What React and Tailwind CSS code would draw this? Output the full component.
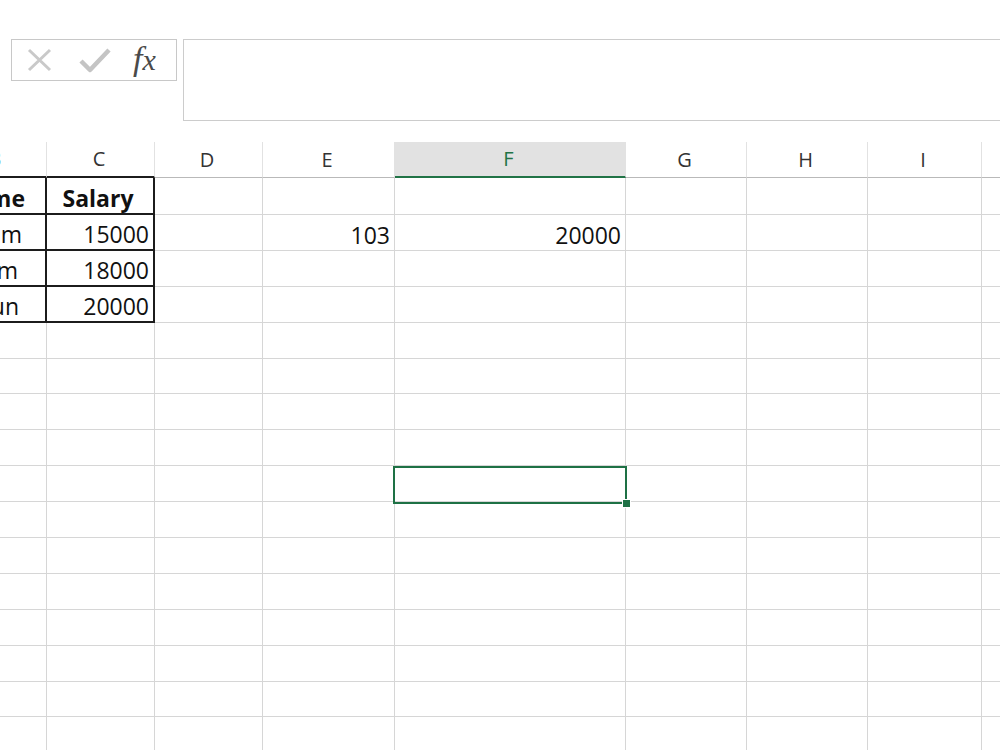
import React from "react";

const columns = [
  { key: "B", width: "w-[100px] -ml-[53px]" },
  { key: "C", width: "w-[108px]" },
  { key: "D", width: "w-[108px]" },
  { key: "E", width: "w-[132px]" },
  { key: "F", width: "w-[231px]" },
  { key: "G", width: "w-[121px]" },
  { key: "H", width: "w-[121px]" },
  { key: "I", width: "w-[114px]" },
  { key: "J", width: "w-[100px]" },
];

// visible cell contents
const data = {
  1: {
    B: { text: "Name", bold: true, pad: "pr-[20px]" },
    C: { text: "Salary", bold: true, center: true },
  },
  2: {
    B: { text: "Ram", pad: "pr-[23px]" },
    C: { text: "15000" },
    E: { text: "103" },
    F: { text: "20000" },
  },
  3: {
    B: { text: "Shyam", pad: "pr-[27px]" },
    C: { text: "18000" },
  },
  4: {
    B: { text: "Arun", pad: "pr-[26px]" },
    C: { text: "20000" },
  },
};

const rows = Array.from({ length: 16 }, (_, i) => i + 1);

const inTable = (row, col) => row <= 4 && (col === "B" || col === "C");

const FormulaBar = () => (
  <div className="flex pt-[39px]">
    <div className="ml-[11px] w-[166px] h-[42px] border-[1.5px] border-[#c8c8c8] flex items-center shrink-0">
      <svg width="26" height="24" viewBox="0 0 26 24" className="ml-[15px]">
        <path d="M2 2 L23 22 M23 2 L2 22" stroke="#c9c9c9" strokeWidth="3" fill="none" />
      </svg>
      <svg width="32" height="26" viewBox="0 0 32 26" className="ml-[26px]">
        <path d="M2 14 L11 23 L30 3" stroke="#c4c4c4" strokeWidth="4.5" fill="none" strokeLinejoin="round" />
      </svg>
      <span className="ml-[22px] -mt-[2px] font-['Liberation_Serif',serif] italic text-[34px] leading-none text-[#4a4a4a]">
        f<span className="text-[30px]">x</span>
      </span>
    </div>
    <div className="ml-[6px] -mr-[6px] flex-1 h-[82px] border-[1.5px] border-[#cccccc]"></div>
  </div>
);

const HeaderRow = () => (
  <div className="flex mt-[21px] h-[36px]">
    {columns.map((col) => {
      const selected = col.key === "F";
      const cls = selected
        ? "bg-[#e2e2e2] border-b-2 border-b-[#217346] text-[#217346]"
        : col.key === "B"
        ? "border-b-2 border-b-[#1c1c1c] text-[#69b3de]"
        : col.key === "C"
        ? "border-b-2 border-b-[#1c1c1c] text-[#333]"
        : "border-b border-b-[#b9b9b9] text-[#333]";
      return (
        <div
          key={col.key}
          className={`${col.width} shrink-0 h-full border-r border-r-[#e2e2e2] flex items-center justify-center pr-[3px] text-[20px] ${cls}`}
        >
          {col.key}
        </div>
      );
    })}
  </div>
);

const Cell = ({ row, col }) => {
  const cell = data[row] && data[row][col.key];
  const table = inTable(row, col.key);
  const height = row === 1 ? "h-[37px]" : "h-[35.9px]";
  const border = table
    ? "border-r-2 border-b-2 border-[#1c1c1c]"
    : "border-r border-b border-[#d6d6d6]";
  const align = cell && cell.center ? "justify-center" : "justify-end";
  return (
    <div className={`${col.width} ${height} ${border} shrink-0 relative flex items-center ${align} ${cell && cell.pad ? cell.pad : "pr-[4px]"}`}>
      {cell && (
        <span className={`pt-[5px] text-[23px] text-[#111] whitespace-nowrap ${cell.bold ? "font-bold" : ""}`}>
          {cell.text}
        </span>
      )}
      {row === 9 && col.key === "F" && (
        <div className="absolute z-10 -left-[2px] top-0 w-[234px] h-[38px] border-2 border-[#1e7145]">
          <div className="absolute -right-[6px] -bottom-[6px] w-[9px] h-[9px] bg-[#1e7145] border border-white"></div>
        </div>
      )}
    </div>
  );
};

export default function App() {
  return (
    <div className="w-[1000px] h-[750px] overflow-hidden bg-white font-['Open_Sans',sans-serif]">
      <FormulaBar />
      <HeaderRow />
      <div className="flex flex-col">
        {rows.map((row) => (
          <div key={row} className="flex">
            {columns.map((col) => (
              <Cell key={col.key} row={row} col={col} />
            ))}
          </div>
        ))}
      </div>
    </div>
  );
}
